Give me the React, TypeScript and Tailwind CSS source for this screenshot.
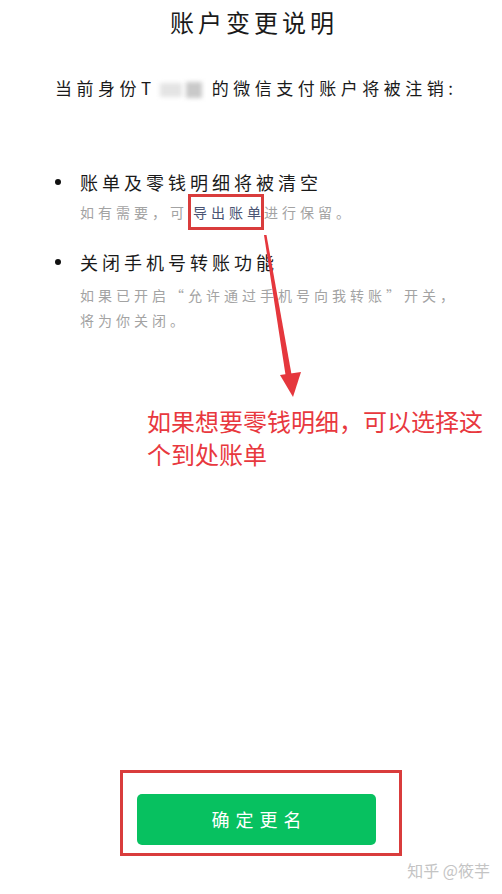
import React from "react";

const cjk = "font-['Noto_Sans_CJK_SC','Noto_Sans',sans-serif]";

export default function App() {
  return (
    <main className={`relative w-full h-[894px] overflow-hidden bg-white ${cjk}`}>
      {/* Title */}
      <h1 className="mt-[6px] h-[32px] pl-[6px] text-center text-[24px] leading-[32px] tracking-[4px] text-[#1a1a1a] font-normal">
        账户变更说明
      </h1>

      {/* Subtitle with blurred name */}
      <p className="mt-[36px] h-[28px] pl-[55px] text-[17px] leading-[28px] tracking-[4.5px] text-[#1a1a1a] whitespace-nowrap">
        当前身份T
        <span className="inline-block w-[56px] h-[20px] align-middle relative">
          <span className="absolute left-[4px] top-[3px] w-[22px] h-[14px] bg-[#e4e4e4] blur-[2px]" />
          <span className="absolute left-[30px] top-[2px] w-[16px] h-[16px] bg-[#c9c9c9] blur-[2px]" />
        </span>
        的微信支付账户将被注销:
      </p>

      {/* Items */}
      <ul className="mt-[66px] pl-[55px] pr-[20px]">
        <li className="flex">
          <span className="mt-[11px] mr-[19px] w-[6px] h-[6px] shrink-0 rounded-full bg-[#111]" />
          <div>
            <div className="h-[28px] text-[18px] leading-[28px] tracking-[4px] text-[#1a1a1a]">
              账单及零钱明细将被清空
            </div>
            <div className="mt-[4px] text-[14px] leading-[25px] tracking-[4px] text-[#a3a3a3] whitespace-nowrap">
              如有需要，可
              <span className="border-[3px] border-[#d93c3c] py-[5px] pl-[2px] text-[#4a5472]">
                导出账<span className="tracking-normal">单</span>
              </span>
              进行保留。
            </div>
          </div>
        </li>
        <li className="mt-[23px] flex">
          <span className="mt-[11px] mr-[19px] w-[6px] h-[6px] shrink-0 rounded-full bg-[#111]" />
          <div>
            <div className="h-[28px] text-[18px] leading-[28px] tracking-[4px] text-[#1a1a1a]">
              关闭手机号转账功能
            </div>
            <div className="mt-[7px] text-[14px] leading-[25px] tracking-[4px] text-[#a3a3a3] whitespace-nowrap">
              如果已开启“允许通过手机号向我转账”开关，
              <br />
              将为你关闭。
            </div>
          </div>
        </li>
      </ul>

      {/* Annotation */}
      <p className="mt-[71px] pl-[147px] text-[24px] leading-[33px] text-[#e8383e]">
        如果想要零钱明细，可以选择这
        <br />
        个到处账单
      </p>

      {/* Button with highlight box */}
      <div className="mt-[300px] ml-[120px] w-[282px] h-[86px] border-[3px] border-[#d93c3c] pl-[14px] pr-[23px] pt-[21px]">
        <button className="w-[239px] h-[51px] rounded-[5px] bg-[#07c160] text-white text-[18px] tracking-[6px] pl-[6px]">
          确定更名
        </button>
      </div>

      {/* Watermark */}
      <div className="mt-[4px] pr-[12px] text-right text-[16px] leading-[20px] text-[#c4c4c4]">
        知乎 @筱芋
      </div>

      {/* Arrow overlay */}
      <svg className="absolute left-0 top-0 pointer-events-none" width="502" height="894">
        <polygon points="264,235 266.5,235 292,377 286,378" fill="#e5373d" />
        <polygon points="280,375 301,372 293,397" fill="#e5373d" />
      </svg>
    </main>
  );
}
